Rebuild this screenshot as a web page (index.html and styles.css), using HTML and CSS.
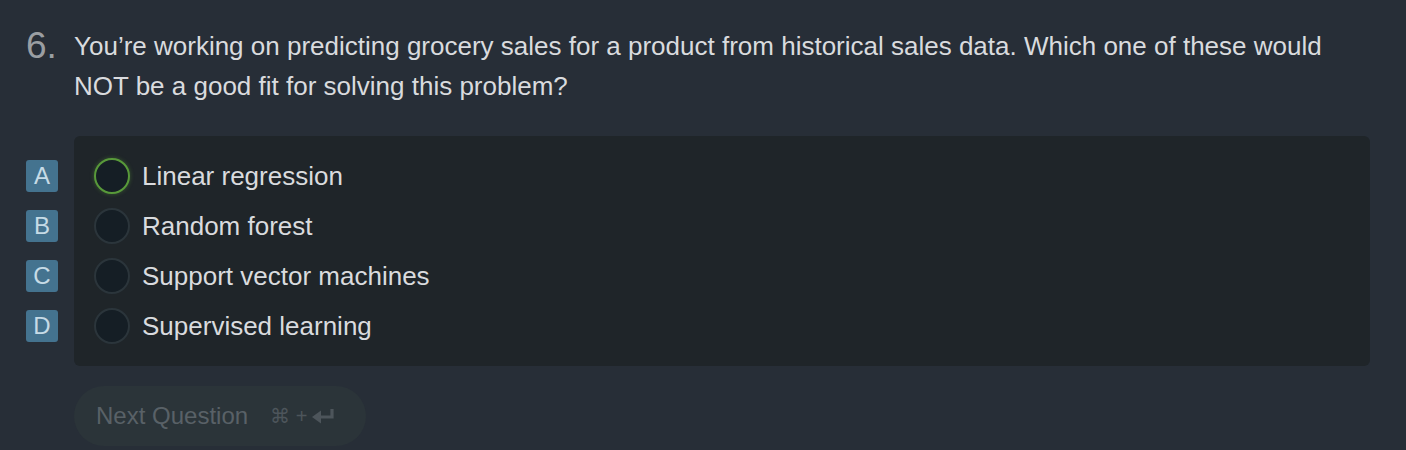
FILE: index.html
```html
<!DOCTYPE html>
<html>
<head>
<meta charset="utf-8">
<link rel="stylesheet" href="styles.css">
</head>
<body>
<div class="page">
  <div class="question">
    <div class="qnum">6.</div>
    <div class="qtext">You’re working on predicting grocery sales for a product from historical sales data. Which one of these would NOT be a good fit for solving this problem?</div>
  </div>
  <div class="answers">
    <div class="letters">
      <div class="letter-row"><span class="badge">A</span></div>
      <div class="letter-row"><span class="badge">B</span></div>
      <div class="letter-row"><span class="badge">C</span></div>
      <div class="letter-row"><span class="badge">D</span></div>
    </div>
    <div class="box">
      <div class="opt"><span class="radio focus"></span><span class="label">Linear regression</span></div>
      <div class="opt"><span class="radio"></span><span class="label">Random forest</span></div>
      <div class="opt"><span class="radio"></span><span class="label">Support vector machines</span></div>
      <div class="opt"><span class="radio"></span><span class="label">Supervised learning</span></div>
    </div>
  </div>
  <div class="actions">
    <button class="next">Next Question <span class="kbd">⌘ +
      <svg width="24" height="18" viewBox="0 0 24 18"><path d="M20 2 V10 H7" fill="none" stroke="currentColor" stroke-width="3.2"/><path d="M0 10 L9 3.5 V16.5 Z" fill="currentColor"/></svg></span></button>
  </div>
</div>
</body>
</html>
```
FILE: styles.css
```css
html, body {
  margin: 0;
  padding: 0;
  background: #272e37;
}
body {
  font-family: "Liberation Sans", Arial, Helvetica, sans-serif;
  width: 1406px;
  height: 450px;
  overflow: hidden;
}
.page {
  padding: 26px 36px 0 26px;
}
.question {
  display: flex;
  align-items: flex-start;
}
.qnum {
  width: 48px;
  font-size: 37px;
  line-height: 40px;
  color: #9a9ea2;
}
.qtext {
  flex: 1;
  font-size: 26px;
  line-height: 40px;
  color: #d9dbde;
  padding-right: 20px;
}
.answers {
  display: flex;
  margin-top: 30px;
}
.letters {
  width: 48px;
  padding-top: 15px;
}
.letter-row {
  height: 50px;
  display: flex;
  align-items: center;
}
.badge {
  width: 32px;
  height: 32px;
  border-radius: 3px;
  background: #44738f;
  color: #c6dbe6;
  font-size: 24px;
  display: flex;
  align-items: center;
  justify-content: center;
}
.box {
  flex: 1;
  background: #1f2529;
  border-radius: 6px;
  padding: 15px 20px;
}
.opt {
  height: 50px;
  display: flex;
  align-items: center;
}
.radio {
  width: 32px;
  height: 32px;
  border-radius: 50%;
  background: #151e25;
  border: 2px solid #2b353b;
  margin-right: 12px;
  flex: none;
}
.radio.focus {
  border-color: #58993a;
  box-shadow: 0 0 4px rgba(88, 153, 58, 0.45);
}
.label {
  font-size: 26px;
  color: #d9dbde;
}
.actions {
  padding-left: 48px;
  margin-top: 20px;
}
.next {
  height: 60px;
  width: 292px;
  border: none;
  border-radius: 30px;
  background: #2b3439;
  color: #596167;
  font-family: inherit;
  font-size: 24px;
  padding: 0 0 0 22px;
  display: flex;
  align-items: center;
}
.kbd {
  margin-left: 22px;
  font-size: 20px;
  display: flex;
  align-items: center;
  gap: 5px;
  color: #4d555b;
}
```
